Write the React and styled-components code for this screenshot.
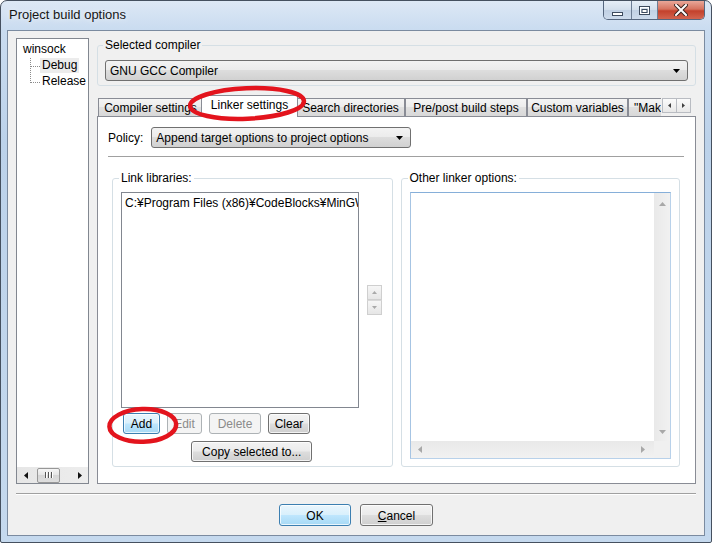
import React from "react";
import styled, { createGlobalStyle, css } from "styled-components";

const GlobalStyle = createGlobalStyle`
  html, body { margin: 0; padding: 0; background: #ffffff; }
  body {
    font-family: "Liberation Sans", Arial, sans-serif;
    font-size: 12px;
    line-height: 16px;
    color: #000;
  }
  * { box-sizing: border-box; }
`;

// small solid triangle used by combos, scrollbars and spinners
const Arrow = ({ dir = "down", w = 7, h = 4, color = "#000" }) => {
  const pts = {
    down: `0,0 ${w},0 ${w / 2},${h}`,
    up: `0,${h} ${w},${h} ${w / 2},0`,
    left: `${w},0 ${w},${h} 0,${h / 2}`,
    right: `0,0 0,${h} ${w},${h / 2}`,
  }[dir];
  return (
    <svg width={w} height={h} viewBox={`0 0 ${w} ${h}`} style={{ display: "block" }}>
      <polygon points={pts} fill={color} />
    </svg>
  );
};

/* ---------- window frame ---------- */

const Window = styled.div`
  position: relative;
  width: 712px;
  height: 543px;
  display: flex;
  flex-direction: column;
  padding: 0 6px 6px;
  border: 1px solid #45505f;
  border-radius: 7px 7px 2px 2px;
  background: linear-gradient(180deg, #dde8f5 0px, #cadcf0 28px, #bcd2ea 140px, #c5d9ee 100%);
  overflow: hidden;
`;

const TitleBar = styled.div`
  flex: none;
  height: 29px;
  display: flex;
  align-items: flex-start;
`;

const Title = styled.div`
  padding: 6px 0 0 2px;
  font-size: 13px;
  line-height: 16px;
  color: #161616;
  text-shadow: 0 0 6px rgba(255, 255, 255, 0.9);
`;

const Controls = styled.div`
  display: flex;
  margin-left: auto;
  height: 19px;
  border: 1px solid #55667e;
  border-top: none;
  border-radius: 0 0 5px 5px;
  overflow: hidden;
`;

const CtrlButton = styled.div`
  width: ${(p) => p.$w}px;
  display: flex;
  align-items: center;
  justify-content: center;
  background: linear-gradient(#e6eef7, #d3dfec 48%, #c1d1e4 52%, #cddbec);
  & + & { border-left: 1px solid #6c7d94; }
  ${(p) =>
    p.$close &&
    css`
      background: linear-gradient(#e9a799, #d6735f 45%, #c3412c 55%, #d2644f);
    `}
`;

const Client = styled.div`
  flex: 1;
  min-height: 0;
  display: flex;
  flex-direction: column;
  background: #f0f0f0;
  border: 1px solid #7b8ba0;
`;

const Body = styled.div`
  flex: 1;
  min-height: 0;
  display: flex;
  gap: 8px;
  padding: 7px 8px 0 8px;
`;

/* ---------- target tree ---------- */

const Tree = styled.div`
  width: 73px;
  flex: none;
  display: flex;
  flex-direction: column;
  background: #fff;
  border: 1px solid #828790;
`;

const TreeItems = styled.div`
  flex: 1;
  padding: 2px 0 0 4px;
`;

const TreeRow = styled.div`
  position: relative;
  height: 16px;
  display: flex;
  align-items: center;
  padding-left: ${(p) => p.$indent || 0}px;
  ${(p) =>
    p.$branch &&
    css`
      &::before {
        content: "";
        position: absolute;
        left: 9px;
        width: 9px;
        top: ${p.$first ? 1 : -7}px;
        height: ${p.$first ? 8 : 16}px;
        border-left: 1px dotted #8c8c8c;
        border-bottom: 1px dotted #8c8c8c;
      }
    `}
`;

const TreeLabel = styled.span`
  padding: 0 2px;
  line-height: 15px;
  background: ${(p) => (p.$selected ? "#ececec" : "transparent")};
`;

const HScroll = styled.div`
  flex: none;
  height: 16px;
  display: flex;
  align-items: center;
  background: linear-gradient(90deg, #e6e6e6, #ededed);
`;

const ScrollArrowBox = styled.div`
  width: ${(p) => p.$w || 17}px;
  height: 100%;
  flex: none;
  display: flex;
  align-items: center;
  justify-content: center;
`;

const Thumb = styled.div`
  width: 23px;
  height: 15px;
  margin-left: 3px;
  border: 1px solid #979797;
  border-radius: 2px;
  background: linear-gradient(#f5f5f5, #e4e4e4 50%, #d6d6d6 50%, #dedede);
  display: flex;
  align-items: center;
  justify-content: center;
  gap: 2px;
`;

const Grip = styled.span`
  width: 1px;
  height: 6px;
  background: #555;
  box-shadow: 1px 0 #fff;
`;

const Fill = styled.div`
  flex: 1;
`;

/* ---------- right side ---------- */

const Main = styled.div`
  flex: 1;
  min-width: 0;
  display: flex;
  flex-direction: column;
`;

const Group = styled.fieldset`
  margin: 0;
  min-width: 0;
  border: 1px solid #d5dfe5;
  border-radius: 3px;
  padding: ${(p) => p.$pad};
  display: flex;
  flex-direction: column;
  flex: ${(p) => (p.$grow ? 1 : "none")};
`;

const Legend = styled.legend`
  padding: 1px 2px 0;
  margin-left: -2px;
  line-height: 13px;
`;

const Combo = styled.div`
  height: 21px;
  width: ${(p) => (p.$w ? `${p.$w}px` : "auto")};
  flex: none;
  display: flex;
  align-items: center;
  justify-content: space-between;
  padding: 1px 7px 0 4px;
  border: 1px solid #707070;
  border-radius: 3px;
  background: linear-gradient(#f3f3f3, #ebebeb 50%, #dddddd 50%, #d1d1d1);
  white-space: nowrap;
`;

const Notebook = styled.div`
  flex: 1;
  min-height: 0;
  margin-top: 9px;
  display: flex;
  flex-direction: column;
`;

const TabStrip = styled.div`
  flex: none;
  height: 22px;
  display: flex;
  padding-left: 1px;
`;

const TabList = styled.div`
  flex: 1;
  min-width: 0;
  display: flex;
  align-items: flex-end;
  overflow: hidden;
`;

const Tab = styled.div`
  flex: none;
  width: ${(p) => p.$w}px;
  height: 18px;
  margin-bottom: 1px;
  display: flex;
  align-items: center;
  justify-content: center;
  white-space: nowrap;
  overflow: hidden;
  border: 1px solid #898c95;
  border-bottom: none;
  background: linear-gradient(#f4f4f4, #ececec 50%, #e0e0e0 50%, #d8d8d8);
  ${(p) =>
    p.$active &&
    css`
      position: relative;
      z-index: 2;
      height: 22px;
      margin: 0 -2px;
      align-items: flex-start;
      padding-top: 1px;
      background: #fff;
    `}
  ${(p) =>
    p.$clip &&
    css`
      justify-content: flex-start;
      padding-left: 5px;
    `}
`;

const TabScroll = styled.div`
  flex: none;
  display: flex;
  align-self: flex-start;
  height: 15px;
  margin: 3px 5px 0 1px;
`;

const TabScrollButton = styled.div`
  width: 15px;
  height: 15px;
  display: flex;
  align-items: center;
  justify-content: center;
  border: 1px solid #b9bcc2;
  background: linear-gradient(#fbfbfb, #e8e8e8);
  & + & { width: 14px; border-left: none; }
`;

const Panel = styled.div`
  flex: 1;
  min-height: 0;
  margin-top: -1px;
  display: flex;
  flex-direction: column;
  padding: 10px 11px 16px 10px;
  background: #fff;
  border: 1px solid #898c95;
`;

const PolicyRow = styled.div`
  flex: none;
  display: flex;
  align-items: center;
  gap: 8px;
`;

const Rule = styled.div`
  flex: none;
  height: 1px;
  margin-top: 8px;
  background: #a0a0a0;
`;

const Groups = styled.div`
  flex: 1;
  min-height: 0;
  display: flex;
  gap: 8px;
  margin: 14px 4px 0;
`;

const ListRow = styled.div`
  flex: 1;
  display: flex;
  align-items: center;
  gap: 8px;
`;

const ListBox = styled.div`
  width: 238px;
  align-self: stretch;
  padding: 2px 0 0 3px;
  background: #fff;
  border: 1px solid #828790;
  white-space: nowrap;
  overflow: hidden;
`;

const Spin = styled.div`
  width: 15px;
  display: flex;
  flex-direction: column;
`;

const SpinButton = styled.div`
  height: 15px;
  display: flex;
  align-items: center;
  justify-content: center;
  border: 1px solid #cfcfcf;
  background: linear-gradient(#f6f6f6, #e6e6e6);
  & + & { border-top-color: #d9d9d9; }
`;

const ButtonRow = styled.div`
  flex: none;
  display: flex;
  gap: 7px;
  padding-left: 2px;
  margin-top: 5px;
`;

const CenterRow = styled.div`
  flex: none;
  display: flex;
  justify-content: center;
  margin-top: 7px;
`;

const Button = styled.button`
  width: ${(p) => p.$w}px;
  height: ${(p) => p.$h || 21}px;
  padding: 1px 0 0;
  font: inherit;
  color: #000;
  border: 1px solid #707070;
  border-radius: 3px;
  background: linear-gradient(#f3f3f3, #ebebeb 48%, #dddddd 52%, #cfcfcf);
  box-shadow: inset 0 0 0 1px rgba(255, 255, 255, 0.75);
  ${(p) =>
    p.$default &&
    css`
      border-color: #3c7fb1;
      background: linear-gradient(#eaf6fd, #d9f0fc 48%, #bee6fd 52%, #a7d9f5);
    `}
  &:disabled {
    color: #8b8b8b;
    border-color: #adb2b5;
    background: #f4f4f4;
    box-shadow: none;
  }
`;

const Memo = styled.div`
  flex: 1;
  display: grid;
  grid-template-columns: 1fr 16px;
  grid-template-rows: 1fr 17px;
  background: #fff;
  border: 1px solid;
  border-color: #86afd9 #b8d1ea #b8d1ea #a6c4e3;
`;

const VTrack = styled.div`
  display: flex;
  flex-direction: column;
  justify-content: space-between;
  align-items: center;
  padding: 9px 0 7px;
  background: linear-gradient(90deg, #e9e9e9, #f1f1f1);
`;

const HTrack = styled.div`
  display: flex;
  justify-content: space-between;
  align-items: center;
  padding: 0 9px 0 7px;
  background: linear-gradient(#e9e9e9, #f1f1f1);
`;

const Corner = styled.div`
  background: #f0f0f0;
`;

/* ---------- dialog buttons ---------- */

const FooterRule = styled.div`
  flex: none;
  height: 1px;
  margin: 9px 8px 0;
  background: #a0a0a0;
  box-shadow: 0 1px #ffffff;
`;

const Footer = styled.div`
  flex: none;
  display: flex;
  justify-content: center;
  gap: 9px;
  padding: 10px 0 9px;
`;

/* red hand-drawn marks on top of the dialog */
const Marks = styled.svg`
  position: absolute;
  left: -1px;
  top: -1px;
  width: 712px;
  height: 543px;
  pointer-events: none;
  z-index: 5;
`;

const tabs = [
  { label: "Compiler settings", w: 105 },
  { label: "Linker settings", w: 97, active: true },
  { label: "Search directories", w: 109 },
  { label: "Pre/post build steps", w: 122 },
  { label: "Custom variables", w: 101 },
  { label: "\"Makefile\"", w: 80, clip: true },
];

export default function App() {
  return (
    <>
      <GlobalStyle />
      <Window>
        <TitleBar>
          <Title>Project build options</Title>
          <Controls>
            <CtrlButton $w={27}>
              <svg width="13" height="12" viewBox="0 0 13 12">
                <rect x="1.5" y="8.5" width="10" height="3" fill="#fff" stroke="#3d4b5e" />
              </svg>
            </CtrlButton>
            <CtrlButton $w={26}>
              <svg width="13" height="11" viewBox="0 0 13 11">
                <rect x="1.5" y="1.5" width="10" height="8" fill="none" stroke="#3d4b5e" strokeWidth="1" />
                <rect x="2.5" y="2.5" width="8" height="6" fill="none" stroke="#fff" strokeWidth="1" />
                <rect x="4" y="4.5" width="5" height="3" fill="#fff" stroke="#3d4b5e" strokeWidth="1" />
              </svg>
            </CtrlButton>
            <CtrlButton $w={47} $close>
              <svg width="14" height="12" viewBox="0 0 14 12">
                <path d="M2 1 L12 11 M12 1 L2 11" stroke="#3b2520" strokeWidth="4" strokeLinecap="square" />
                <path d="M2 1 L12 11 M12 1 L2 11" stroke="#fff" strokeWidth="2" strokeLinecap="square" />
              </svg>
            </CtrlButton>
          </Controls>
        </TitleBar>

        <Client>
          <Body>
            <Tree>
              <TreeItems>
                <TreeRow>
                  <TreeLabel>winsock</TreeLabel>
                </TreeRow>
                <TreeRow $indent={19} $branch $first>
                  <TreeLabel $selected>Debug</TreeLabel>
                </TreeRow>
                <TreeRow $indent={19} $branch>
                  <TreeLabel>Release</TreeLabel>
                </TreeRow>
              </TreeItems>
              <HScroll>
                <ScrollArrowBox>
                  <Arrow dir="left" w={4} h={7} color="#111" />
                </ScrollArrowBox>
                <Thumb>
                  <Grip />
                  <Grip />
                  <Grip />
                </Thumb>
                <Fill />
                <ScrollArrowBox>
                  <Arrow dir="right" w={4} h={7} color="#111" />
                </ScrollArrowBox>
              </HScroll>
            </Tree>

            <Main>
              <Group $pad="8px 7px 4px 7px">
                <Legend>Selected compiler</Legend>
                <Combo>
                  <span>GNU GCC Compiler</span>
                  <Arrow />
                </Combo>
              </Group>

              <Notebook>
                <TabStrip>
                  <TabList>
                    {tabs.map((t) => (
                      <Tab key={t.label} $w={t.w} $active={t.active} $clip={t.clip}>
                        {t.label}
                      </Tab>
                    ))}
                  </TabList>
                  <TabScroll>
                    <TabScrollButton>
                      <Arrow dir="left" w={3} h={5} color="#404040" />
                    </TabScrollButton>
                    <TabScrollButton>
                      <Arrow dir="right" w={3} h={5} color="#404040" />
                    </TabScrollButton>
                  </TabScroll>
                </TabStrip>

                <Panel>
                  <PolicyRow>
                    <span>Policy:</span>
                    <Combo $w={260}>
                      <span>Append target options to project options</span>
                      <Arrow />
                    </Combo>
                  </PolicyRow>
                  <Rule />

                  <Groups>
                    <Group $grow $pad="7px 9px 4px 8px">
                      <Legend>Link libraries:</Legend>
                      <ListRow>
                        <ListBox>C:¥Program Files (x86)¥CodeBlocks¥MinGW¥lib¥libws2_32.a</ListBox>
                        <Spin>
                          <SpinButton>
                            <Arrow dir="up" w={5} h={3} color="#a9a9a9" />
                          </SpinButton>
                          <SpinButton>
                            <Arrow dir="down" w={5} h={3} color="#a9a9a9" />
                          </SpinButton>
                        </Spin>
                      </ListRow>
                      <ButtonRow>
                        <Button $w={37} $default>Add</Button>
                        <Button $w={35} disabled>Edit</Button>
                        <Button $w={52} disabled>Delete</Button>
                        <Button $w={42}>Clear</Button>
                      </ButtonRow>
                      <CenterRow>
                        <Button $w={121}>Copy selected to...</Button>
                      </CenterRow>
                    </Group>

                    <Group $grow $pad="7px 8px 7px 8px">
                      <Legend>Other linker options:</Legend>
                      <Memo>
                        <div />
                        <VTrack>
                          <Arrow dir="up" w={7} h={4} color="#a8a8a8" />
                          <Arrow dir="down" w={7} h={4} color="#a8a8a8" />
                        </VTrack>
                        <HTrack>
                          <Arrow dir="left" w={4} h={7} color="#a8a8a8" />
                          <Arrow dir="right" w={4} h={7} color="#a8a8a8" />
                        </HTrack>
                        <Corner />
                      </Memo>
                    </Group>
                  </Groups>
                </Panel>
              </Notebook>
            </Main>
          </Body>

          <FooterRule />
          <Footer>
            <Button $w={72} $h={22} $default>OK</Button>
            <Button $w={73} $h={22}>
              <u>C</u>ancel
            </Button>
          </Footer>
        </Client>

        <Marks viewBox="0 0 712 543">
          <ellipse
            cx="247"
            cy="103.5"
            rx="57"
            ry="15.2"
            transform="rotate(-2.5 247 103.5)"
            fill="none"
            stroke="#e3141d"
            strokeWidth="4.5"
          />
          <ellipse
            cx="142.8"
            cy="425.4"
            rx="33.4"
            ry="16.4"
            transform="rotate(-2 142.8 425.4)"
            fill="none"
            stroke="#e3141d"
            strokeWidth="4.5"
          />
        </Marks>
      </Window>
    </>
  );
}
